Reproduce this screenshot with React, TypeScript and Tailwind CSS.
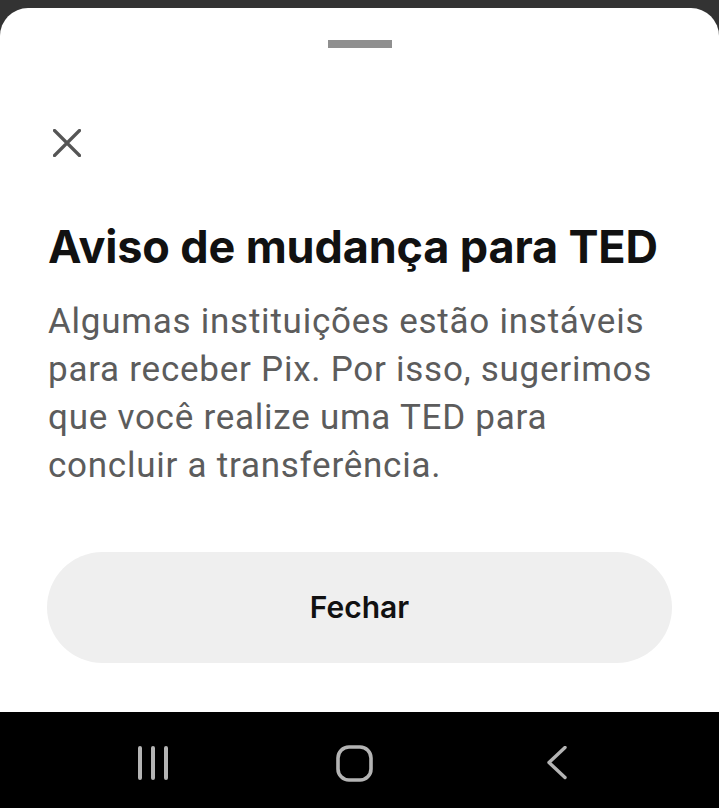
import React from "react";

export default function App() {
  return (
    <div className="w-[719px] h-[808px] bg-[#333333] flex flex-col pt-[8px] overflow-hidden">
      <div className="flex-1 bg-white rounded-t-[28px] flex flex-col">
        <div className="flex justify-center pt-[32px]">
          <div className="w-[64px] h-[8px] bg-[#8f8f8f]" />
        </div>
        <div className="pl-[53px] pt-[81px]">
          <svg width="28" height="28" viewBox="0 0 28 28" fill="none">
            <path d="M1.5 1.5 L26.5 26.5 M26.5 1.5 L1.5 26.5" stroke="#555555" strokeWidth="3.2" strokeLinecap="round" />
          </svg>
        </div>
        <div className="px-[48px] pt-[64px]">
          <h1 className="text-[45px] leading-[52px] font-bold text-[#111111] tracking-[-0.15px]" style={{ fontFamily: "Inter, 'Noto Sans', sans-serif" }}>
            Aviso de mudança para TED
          </h1>
          <p className="mt-[25px] text-[35px] leading-[48px] text-[#5c5c5c] tracking-[0.75px]" style={{ fontFamily: "Roboto, 'Noto Sans', sans-serif" }}>
            Algumas instituições estão instáveis para receber Pix. Por isso, sugerimos que você realize uma TED para concluir a transferência.
          </p>
        </div>
        <div className="px-[47px] pt-[62px]">
          <button className="w-full h-[111px] rounded-full bg-[#efefef] flex items-center justify-center">
            <span className="text-[30px] font-semibold text-[#111111]" style={{ fontFamily: "Inter, 'Noto Sans', sans-serif" }}>
              Fechar
            </span>
          </button>
        </div>
      </div>
      <div className="h-[96px] bg-black flex items-center pl-[137px] pt-[6px] shrink-0">
        <svg width="34" height="34" viewBox="0 0 34 34" fill="none">
          <path d="M3 2 V32 M16 2 V32 M29 2 V32" stroke="#b4b4b4" strokeWidth="4" strokeLinecap="round" />
        </svg>
        <svg width="37" height="37" viewBox="0 0 37 37" fill="none" className="ml-[165px]">
          <rect x="2" y="2" width="33" height="33" rx="11" stroke="#b4b4b4" strokeWidth="3.6" />
        </svg>
        <svg width="34" height="34" viewBox="0 0 34 34" fill="none" className="ml-[172px]">
          <path d="M20 1.5 L4 16.5 L20 31.5" stroke="#b4b4b4" strokeWidth="3.4" strokeLinecap="round" strokeLinejoin="round" />
        </svg>
      </div>
    </div>
  );
}
